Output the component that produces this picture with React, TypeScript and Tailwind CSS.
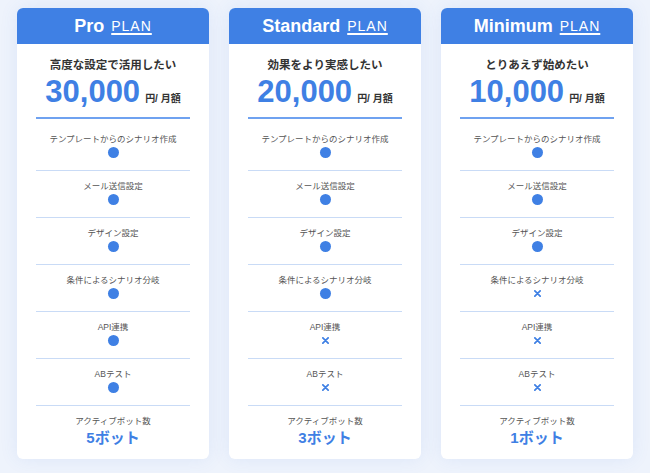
const features = [
  'テンプレートからのシナリオ作成',
  'メール送信設定',
  'デザイン設定',
  '条件によるシナリオ分岐',
  'API連携',
  'ABテスト',
]

const plans = [
  { name: 'Pro', lead: '高度な設定で活用したい', price: '30,000', has: [true, true, true, true, true, true], bots: '5ボット' },
  { name: 'Standard', lead: '効果をより実感したい', price: '20,000', has: [true, true, true, true, false, false], bots: '3ボット' },
  { name: 'Minimum', lead: 'とりあえず始めたい', price: '10,000', has: [true, true, true, false, false, false], bots: '1ボット' },
]

const jp = '[font-family:"Liberation_Sans","Noto_Sans_CJK_JP",sans-serif]'

function Mark({ on }: { on: boolean }) {
  if (on) return <span className="mt-[1px] block w-[11px] h-[11px] rounded-full bg-[#3f80e4]" />
  return (
    <span className="mt-[1px] flex w-[11px] h-[11px] items-center justify-center">
      <svg width="7" height="7" viewBox="0 0 8 8" fill="none" stroke="#3f80e4" strokeWidth="2" strokeLinecap="round">
        <path d="M1 1l6 6M7 1L1 7" />
      </svg>
    </span>
  )
}

export default function App() {
  return (
    <div className={`min-h-[473px] bg-[#eef3fc] pt-[8px] px-[17px] ${jp}`}>
      <div className="grid grid-cols-3 gap-5">
        {plans.map((p) => (
          <div key={p.name} className="rounded-md bg-white shadow-[0_0_18px_rgba(70,120,220,0.10)] overflow-hidden">
            {/* header */}
            <div className="h-[36px] bg-[#3f80e4] flex items-center justify-center gap-[7px] text-white">
              <span className="text-[18px] font-bold leading-none">{p.name}</span>
              <span className="text-[14px] leading-none tracking-[1px] underline decoration-[1.5px] underline-offset-[2px]">PLAN</span>
            </div>

            <div className="px-[19px]">
              <p className="pt-[13px] text-[11.5px] leading-[16px] font-bold text-[#333] text-center">{p.lead}</p>
              <div className="mt-[3px] flex items-baseline justify-center gap-[5px]">
                <span className="text-[31px] leading-[31px] font-bold text-[#3f80e4]">{p.price}</span>
                <span className="text-[10px] font-bold text-[#333]">円/ 月額</span>
              </div>
              <div className="mt-[10px] h-[2px] bg-[#6fa2f0]" />

              {features.map((f, i) => (
                <div
                  key={f}
                  className={
                    i === 0
                      ? 'flex flex-col items-center pt-[13px] pb-[12px]'
                      : 'flex flex-col items-center border-t border-[#c9dbf6] pt-[8px] pb-[12px]'
                  }
                >
                  <span className="text-[8.5px] leading-[14px] text-[#555]">{f}</span>
                  <Mark on={p.has[i]} />
                </div>
              ))}

              <div className="flex flex-col items-center border-t border-[#c9dbf6] pt-[8px] pb-[12px]">
                <span className="text-[8.5px] leading-[14px] text-[#555]">アクティブボット数</span>
                <span className="mt-[1px] text-[15px] leading-[18px] font-bold text-[#3f80e4]">{p.bots}</span>
              </div>
            </div>
          </div>
        ))}
      </div>
    </div>
  )
}
